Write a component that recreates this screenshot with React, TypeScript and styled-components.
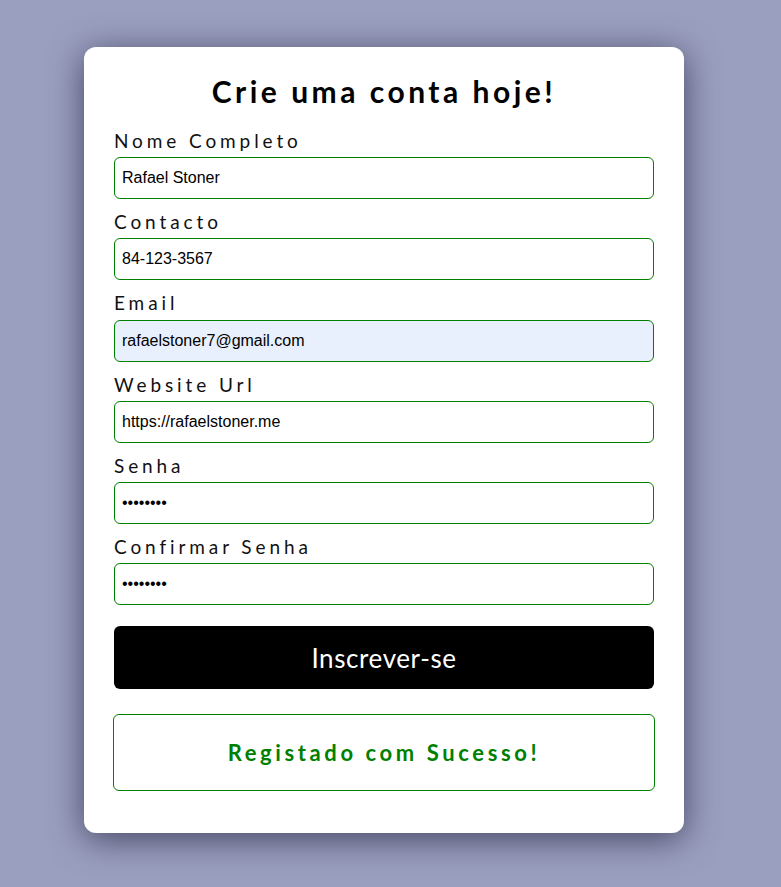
import React from 'react';
import styled, { createGlobalStyle } from 'styled-components';

const GlobalStyle = createGlobalStyle`
  html, body {
    margin: 0;
    padding: 0;
    background: #9b9fbf;
  }
  * {
    box-sizing: border-box;
  }
`;

const Page = styled.div`
  display: flex;
  justify-content: center;
  min-height: 887px;
  padding: 47px 13px 0 0;
  font-family: Lato, 'Noto Sans', sans-serif;
`;

const Card = styled.form`
  width: 600px;
  height: 786px;
  padding: 26px 30px 42px;
  background: #ffffff;
  border-radius: 12px;
  box-shadow: 0 6px 34px rgba(30, 32, 60, 0.7);
`;

const Title = styled.h1`
  margin: 0 0 21px;
  font-size: 30px;
  line-height: 36px;
  font-weight: 700;
  letter-spacing: 3.5px;
  text-align: center;
  color: #000;
`;

const Field = styled.div`
  display: flex;
  flex-direction: column;
  gap: 5px;
  margin-bottom: 12px;
`;

const Label = styled.label`
  font-size: 19px;
  line-height: 22.2px;
  letter-spacing: 3.9px;
  color: #111;
`;

const Input = styled.input<{ $autofill?: boolean }>`
  height: 42px;
  width: 100%;
  padding: 0 7px;
  border: 1px solid #008000;
  border-radius: 6px;
  background: ${({ $autofill }) => ($autofill ? '#e8f0fe' : '#fff')};
  font-family: 'Liberation Sans', Arial, sans-serif;
  font-size: 16px;
  color: #000;
  outline: none;
`;

const Submit = styled.button`
  display: block;
  width: 100%;
  height: 63px;
  margin-top: 21px;
  border: none;
  border-radius: 6px;
  background: #000;
  color: #fff;
  font-family: Lato, 'Noto Sans', sans-serif;
  font-size: 26px;
  letter-spacing: 0.6px;
  cursor: pointer;
`;

const Success = styled.div`
  display: flex;
  align-items: center;
  justify-content: center;
  height: 77px;
  margin: 25px -1px 0;
  border: 1px solid #008000;
  border-radius: 6px;
  color: #008000;
  font-size: 22px;
  font-weight: 700;
  letter-spacing: 3.6px;
`;

const fields = [
  { label: 'Nome Completo', type: 'text', value: 'Rafael Stoner' },
  { label: 'Contacto', type: 'text', value: '84-123-3567' },
  { label: 'Email', type: 'email', value: 'rafaelstoner7@gmail.com', autofill: true },
  { label: 'Website Url', type: 'text', value: 'https://rafaelstoner.me' },
  { label: 'Senha', type: 'password', value: 'rafael12' },
  { label: 'Confirmar Senha', type: 'password', value: 'rafael12' },
];

export default function App() {
  return (
    <>
      <GlobalStyle />
      <Page>
        <Card onSubmit={(e) => e.preventDefault()}>
          <Title>Crie uma conta hoje!</Title>
          {fields.map((f) => (
            <Field key={f.label}>
              <Label>{f.label}</Label>
              <Input type={f.type} defaultValue={f.value} $autofill={f.autofill} />
            </Field>
          ))}
          <Submit type="submit">Inscrever-se</Submit>
          <Success>Registado com Sucesso!</Success>
        </Card>
      </Page>
    </>
  );
}
